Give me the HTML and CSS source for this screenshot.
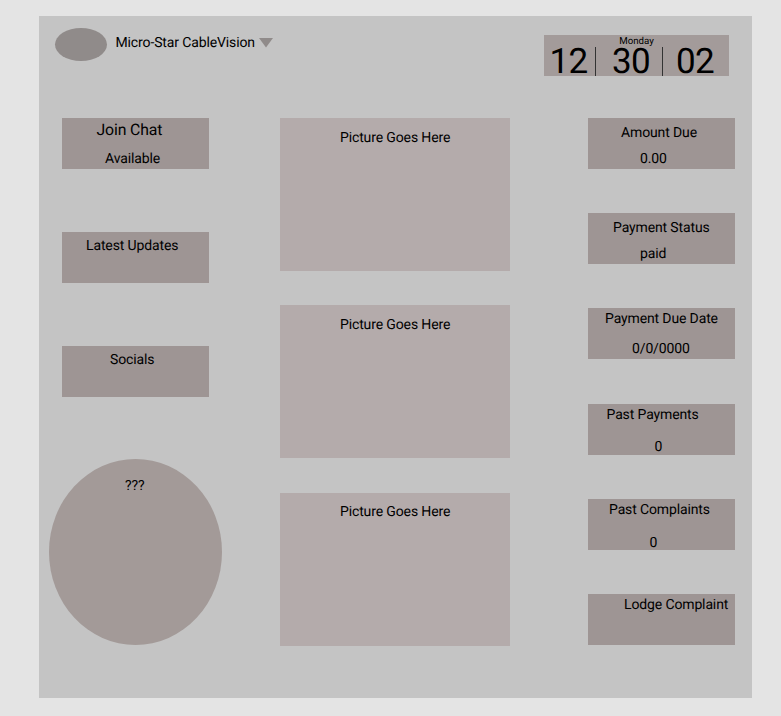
FILE: index.html
```html
<!DOCTYPE html>
<html lang="en">
<head>
<meta charset="utf-8">
<title>Micro-Star CableVision</title>
<link rel="stylesheet" href="styles.css">
</head>
<body>
<div class="panel">
  <header class="header">
    <div class="logo"></div>
    <h1 class="brand">Micro-Star CableVision</h1>
    <svg class="caret" width="14" height="10" viewBox="0 0 14 10"><path d="M0 0H14L7 9.5Z"/></svg>
    <div class="clock">
      <div class="day">Monday</div>
      <div class="time">
        <span class="hours">12</span><i class="bar"></i><span class="minutes">30</span><i class="bar"></i><span class="seconds">02</span>
      </div>
    </div>
  </header>
  <main class="columns">
    <section class="menu">
      <div class="card chat"><p class="title">Join Chat</p><p class="value">Available</p></div>
      <div class="card updates"><p>Latest Updates</p></div>
      <div class="card socials"><p>Socials</p></div>
      <div class="circle"><p>???</p></div>
    </section>
    <section class="pictures">
      <div class="picture"><p>Picture Goes Here</p></div>
      <div class="picture"><p>Picture Goes Here</p></div>
      <div class="picture"><p>Picture Goes Here</p></div>
    </section>
    <section class="account">
      <div class="card amount"><p>Amount Due</p><p class="value">0.00</p></div>
      <div class="card status"><p>Payment Status</p><p class="value">paid</p></div>
      <div class="card due"><p>Payment Due Date</p><p class="value">0/0/0000</p></div>
      <div class="card payments"><p>Past Payments</p><p class="value">0</p></div>
      <div class="card complaints"><p>Past Complaints</p><p class="value">0</p></div>
      <div class="card lodge"><p>Lodge Complaint</p></div>
    </section>
  </main>
</div>
</body>
</html>
```
FILE: styles.css
```css
* { box-sizing: border-box; margin: 0; padding: 0; }
body {
  background: #e4e4e4;
  color: #000;
  font: 14px/16px Roboto, sans-serif;
  letter-spacing: -0.13px;
  text-rendering: geometricPrecision;
  padding: 16px 29px 18px 39px;
  height: 716px;
  overflow: hidden;
}
.panel { height: 682px; background: #c4c4c4; }
.header { display: flex; align-items: flex-start; height: 102px; padding: 12px 23px 0 16px; }
.logo { width: 52px; height: 33px; border-radius: 50%; background: #908b8a; }
.brand { width: 140px; font-size: 14px; font-weight: 400; line-height: 16px; margin: 7px 0 0 8.5px; white-space: nowrap; }
.caret { margin: 10px 0 0 3.5px; fill: #908b8a; }
.clock { width: 185px; height: 41px; margin: 7px 0 0 auto; background: #a39b9a; }
.day { font-size: 9.7px; line-height: 13px; height: 12px; text-align: center; letter-spacing: 0; }
.time { display: flex; height: 29px; padding-left: 5.5px; font-size: 35px; line-height: 29px; letter-spacing: -0.7px; }
.bar { width: 1px; height: 29px; background: #333; }
.hours { width: 45.5px; }
.minutes { width: 66px; padding-left: 16px; }
.seconds { padding-left: 13px; }
.columns { display: grid; grid-template-columns: 173px 230px 147px; column-gap: 58px; padding-left: 10px; height: 528px; justify-content: start; }
.account { margin-left: 20px; width: 147px; }
.menu, .pictures, .account { display: flex; flex-direction: column; justify-content: space-between; }
.pictures { height: 527.8px; }
.menu { height: 527.3px; }
.account { height: 527px; }
.card { width: 147px; height: 51px; background: #9e9594; padding-top: 7px; white-space: nowrap; }
.menu .card { margin-left: 13px; }
.circle { width: 173px; height: 186px; border-radius: 50%; background: #a39a98; padding: 19px 0 0 76px; }
.picture { width: 230px; height: 153px; background: #b4abab; padding: 11.6px 0 0 60px; }
.value { margin-top: 10px; }
.card.chat { padding: 4px 0 0 34.5px; }
.chat .title { font-size: 15.8px; }
.chat .value { margin: 13px 0 0 8.5px; }
.updates { padding: 6px 0 0 24px; }
.socials { padding: 6px 0 0 48px; }
.amount { padding-left: 33px; }
.amount .value { margin-left: 19px; }
.status { padding-left: 25px; }
.status .value { margin-left: 27px; }
.due { padding: 3px 0 0 17px; }
.due .value { margin: 14px 0 0 27px; }
.payments { padding: 3px 0 0 18.5px; }
.payments .value { margin: 16px 0 0 48px; }
.complaints { padding: 3px 0 0 21px; }
.complaints .value { margin: 17px 0 0 40.5px; }
.lodge { padding: 3px 0 0 36px; }
```
